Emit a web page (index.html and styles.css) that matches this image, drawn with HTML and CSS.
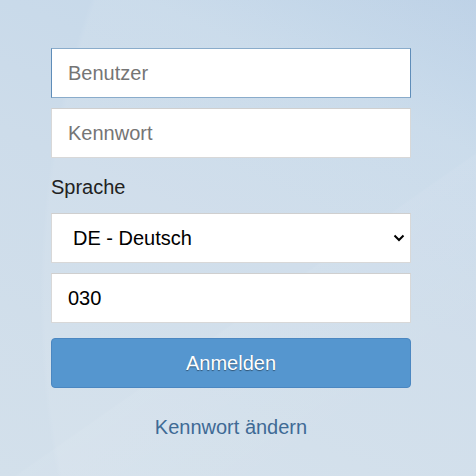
FILE: index.html
```html
<!DOCTYPE html>
<html lang="de">
<head>
<meta charset="utf-8">
<title>Anmelden</title>
<link rel="stylesheet" href="styles.css">
</head>
<body>
<div class="page">
  <form class="login">
    <input class="field field-focus" type="text" placeholder="Benutzer">
    <input class="field" type="password" placeholder="Kennwort">
    <label class="label">Sprache</label>
    <div class="select-wrap">
      <select class="field select">
        <option>DE - Deutsch</option>
      </select>
      <svg class="chev" width="12" height="8" viewBox="0 0 12 8"><path d="M1.5 1.5 L6 6 L10.5 1.5" fill="none" stroke="#000" stroke-width="2"/></svg>
    </div>
    <input class="field field-value" type="text" value="030">
    <button class="btn" type="button">Anmelden</button>
    <a class="link" href="#">Kennwort ändern</a>
  </form>
</div>
</body>
</html>
```

FILE: styles.css
```css
html, body {
  margin: 0;
  height: 100%;
}
body {
  font-family: "Liberation Sans", Arial, sans-serif;
  background:
    radial-gradient(ellipse 520px 700px at 560px 300px, rgba(255,255,255,0.07) 99%, rgba(255,255,255,0) 100%),
    linear-gradient(145deg, rgba(255,255,255,0) 60%, rgba(255,255,255,0.05) 60.3%, rgba(255,255,255,0) 85%),
    linear-gradient(205deg, #b9cfe5 0%, #c7d9ea 22%, #cddcea 50%, #d3e0eb 100%);
}
.page {
  min-height: 100%;
  overflow: hidden;
}
.login {
  width: 360px;
  margin: 48px 0 0 51px;
  display: flex;
  flex-direction: column;
}
.field {
  box-sizing: border-box;
  height: 50px;
  width: 100%;
  margin: 0 0 10px 0;
  padding: 0 16px;
  border: 1px solid #d8d8d8;
  border-top-color: #cfcfcf;
  border-radius: 0;
  background: #fff;
  font-family: "Liberation Sans", Arial, sans-serif;
  font-size: 20px;
  color: #000;
  outline: none;
}
.field::placeholder {
  color: #757575;
}
.field-focus {
  border: 1px solid #8aaccb;
  border-left-color: #5f8db9;
  border-right-color: #5f8db9;
}
.label {
  margin: 8px 0 14px 0;
  font-size: 20px;
  line-height: 23px;
  color: #222;
}
.select-wrap {
  position: relative;
}
.select {
  appearance: none;
  -webkit-appearance: none;
  padding-left: 21px;
  display: block;
}
.chev {
  position: absolute;
  right: 6px;
  top: 21px;
  pointer-events: none;
}
.field-value {
  margin-bottom: 15px;
}
.btn {
  box-sizing: border-box;
  height: 50px;
  width: 100%;
  border: 1px solid #4b87c1;
  border-radius: 4px;
  background: #5596cf;
  color: #fff;
  font-family: "Liberation Sans", Arial, sans-serif;
  font-size: 20px;
  text-shadow: 0 1px 1px rgba(0,0,0,0.45);
  padding: 0;
}
.link {
  align-self: center;
  margin-top: 28px;
  font-size: 20px;
  color: #3f6a95;
  text-decoration: none;
}
```
